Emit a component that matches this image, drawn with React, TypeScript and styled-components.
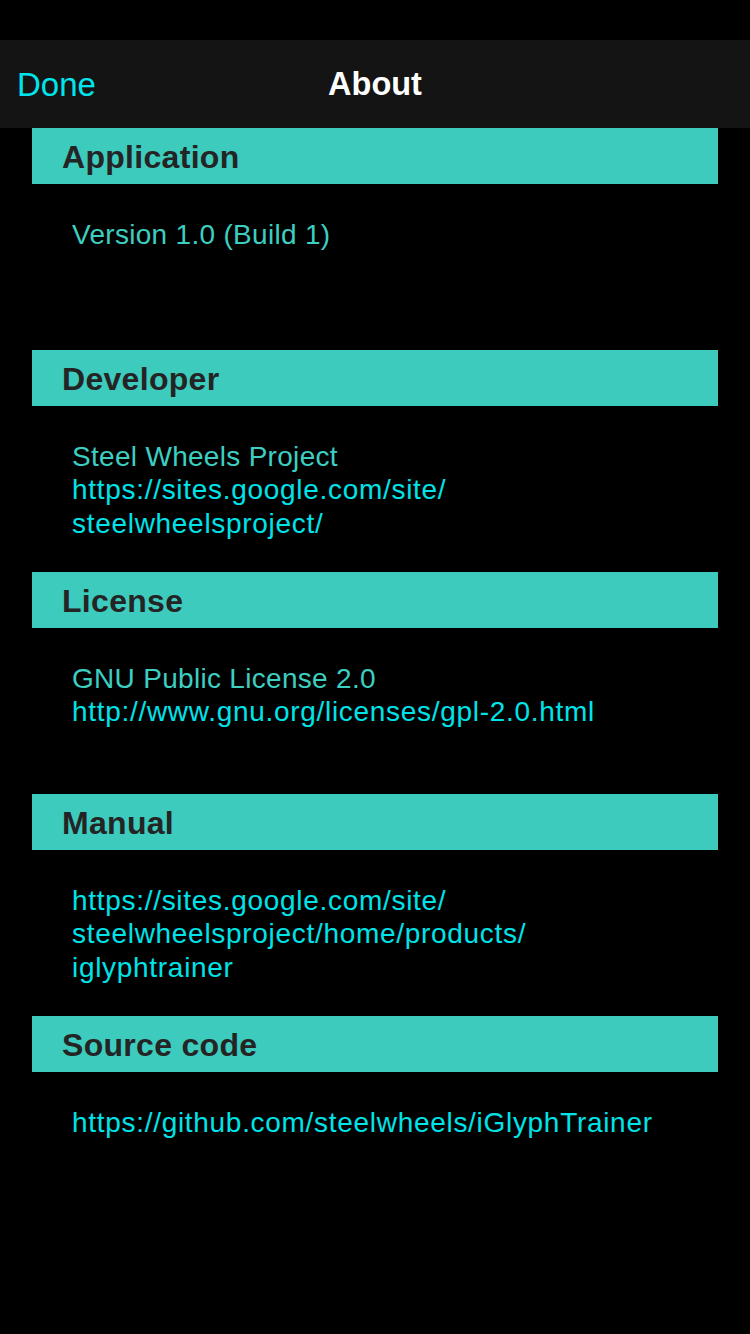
import React from "react";
import styled, { createGlobalStyle } from "styled-components";

const GlobalStyle = createGlobalStyle`
  html, body {
    margin: 0;
    padding: 0;
    background: #000;
  }
  body {
    font-family: "Liberation Sans", Arial, Helvetica, sans-serif;
  }
`;

const Screen = styled.div`
  width: 750px;
  min-height: 1334px;
  background: #000;
  display: flex;
  flex-direction: column;
`;

const StatusBar = styled.div`
  height: 40px;
  background: #000;
`;

const NavBar = styled.div`
  height: 88px;
  background: #141414;
  display: grid;
  grid-template-columns: 1fr auto 1fr;
  align-items: center;
  padding: 0 17px;
  box-sizing: border-box;
`;

const NavButton = styled.span`
  justify-self: start;
  font-size: 33px;
  color: #00e5ec;
  padding-top: 1px;
`;

const NavTitle = styled.span`
  font-size: 32.5px;
  font-weight: 700;
  color: #fff;
  padding-top: 1px;
`;

const List = styled.div`
  display: flex;
  flex-direction: column;
  padding: 0 32px;
`;

const Section = styled.section`
  display: flex;
  flex-direction: column;
`;

const SectionHeader = styled.div`
  height: 56px;
  box-sizing: border-box;
  padding: 2px 0 0 30px;
  background: #3ccbbd;
  display: flex;
  align-items: center;
  font-size: 32px;
  font-weight: 700;
  letter-spacing: 0.3px;
  color: #242424;
`;

const SectionBody = styled.div`
  min-height: 166px;
  box-sizing: border-box;
  padding: 33.5px 0 0 40px;
  display: flex;
  flex-direction: column;
`;

const Line = styled.div<{ $link?: boolean }>`
  font-size: 28px;
  line-height: 33.5px;
  white-space: nowrap;
  letter-spacing: ${(p) => (p.$link ? "0.7px" : "0.3px")};
  color: ${(p) => (p.$link ? "#00e3e8" : "#3ccfc1")};
`;

type Item = { text: string; link?: boolean };

const sections: { title: string; lines: Item[] }[] = [
  { title: "Application", lines: [{ text: "Version 1.0 (Build 1)" }] },
  {
    title: "Developer",
    lines: [
      { text: "Steel Wheels Project" },
      { text: "https://sites.google.com/site/", link: true },
      { text: "steelwheelsproject/", link: true },
    ],
  },
  {
    title: "License",
    lines: [
      { text: "GNU Public License 2.0" },
      { text: "http://www.gnu.org/licenses/gpl-2.0.html", link: true },
    ],
  },
  {
    title: "Manual",
    lines: [
      { text: "https://sites.google.com/site/", link: true },
      { text: "steelwheelsproject/home/products/", link: true },
      { text: "iglyphtrainer", link: true },
    ],
  },
  {
    title: "Source code",
    lines: [
      { text: "https://github.com/steelwheels/iGlyphTrainer", link: true },
    ],
  },
];

export default function App() {
  return (
    <Screen>
      <GlobalStyle />
      <StatusBar />
      <NavBar>
        <NavButton>Done</NavButton>
        <NavTitle>About</NavTitle>
        <span />
      </NavBar>
      <List>
        {sections.map((s) => (
          <Section key={s.title}>
            <SectionHeader>{s.title}</SectionHeader>
            <SectionBody>
              {s.lines.map((l, i) => (
                <Line key={i} $link={l.link}>
                  {l.text}
                </Line>
              ))}
            </SectionBody>
          </Section>
        ))}
      </List>
    </Screen>
  );
}
